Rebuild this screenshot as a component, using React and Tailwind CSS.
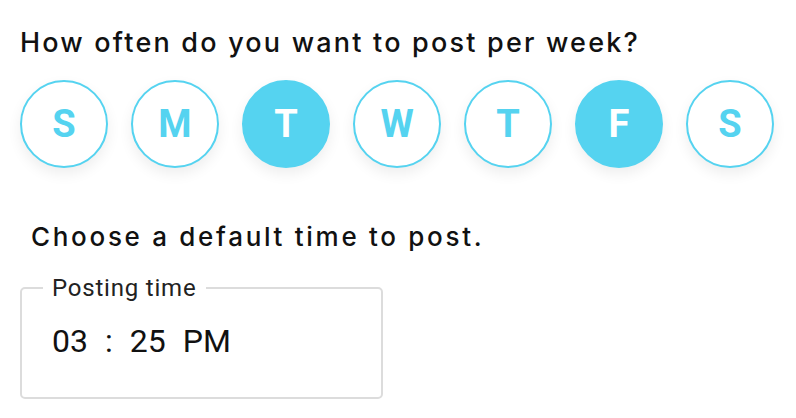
import React, { useState } from "react";

const DAYS = [
  { id: "sun", label: "S" },
  { id: "mon", label: "M" },
  { id: "tue", label: "T" },
  { id: "wed", label: "W" },
  { id: "thu", label: "T" },
  { id: "fri", label: "F" },
  { id: "sat", label: "S" },
];

export default function App() {
  const [picked, setPicked] = useState(["tue", "fri"]);

  function toggle(id) {
    setPicked((p) => (p.includes(id) ? p.filter((d) => d !== id) : [...p, id]));
  }

  return (
    <div className="w-[796px] h-[418px] bg-white overflow-hidden pl-[20px] pt-[29px]">
      {/* Days */}
      <h2 className="font-['Inter',sans-serif] font-medium text-[27px] leading-[27px] tracking-[2.2px] text-[#111]">
        How often do you want to post per week?
      </h2>
      <div className="flex gap-[23px] mt-[24px]">
        {DAYS.map((d) => {
          const on = picked.includes(d.id);
          return (
            <button key={d.id} onClick={() => toggle(d.id)}
              className={
                "w-[88px] h-[88px] rounded-full flex items-center justify-center border-2 border-[#55d3f0] shadow-[0_6px_14px_rgba(0,0,0,0.07)] font-['Roboto',sans-serif] font-bold text-[38px] leading-none " +
                (on ? "bg-[#55d3f0] text-white" : "bg-white text-[#55d3f0]")
              }>
              {d.label}
            </button>
          );
        })}
      </div>

      {/* Time */}
      <h2 className="mt-[56px] ml-[11px] font-['Inter',sans-serif] font-medium text-[26px] leading-[26px] tracking-[2.7px] text-[#111]">
        Choose a default time to post.
      </h2>
      <fieldset className="mt-[20px] w-[363px] border-2 border-[#dcdcdc] rounded-[5px] pl-[21px] pb-[40px]">
        <legend className="px-[9px] font-['Roboto',sans-serif] text-[24px] tracking-[0.8px] text-[#222]">Posting time</legend>
        <div className="mt-[19px] pl-[9px] font-['Roboto',sans-serif] text-[32px] leading-[32px] text-[#111] flex">
          <span>03</span>
          <span className="ml-[17px]">:</span>
          <span className="ml-[17px]">25</span>
          <span className="ml-[17px]">PM</span>
        </div>
      </fieldset>
    </div>
  );
}
